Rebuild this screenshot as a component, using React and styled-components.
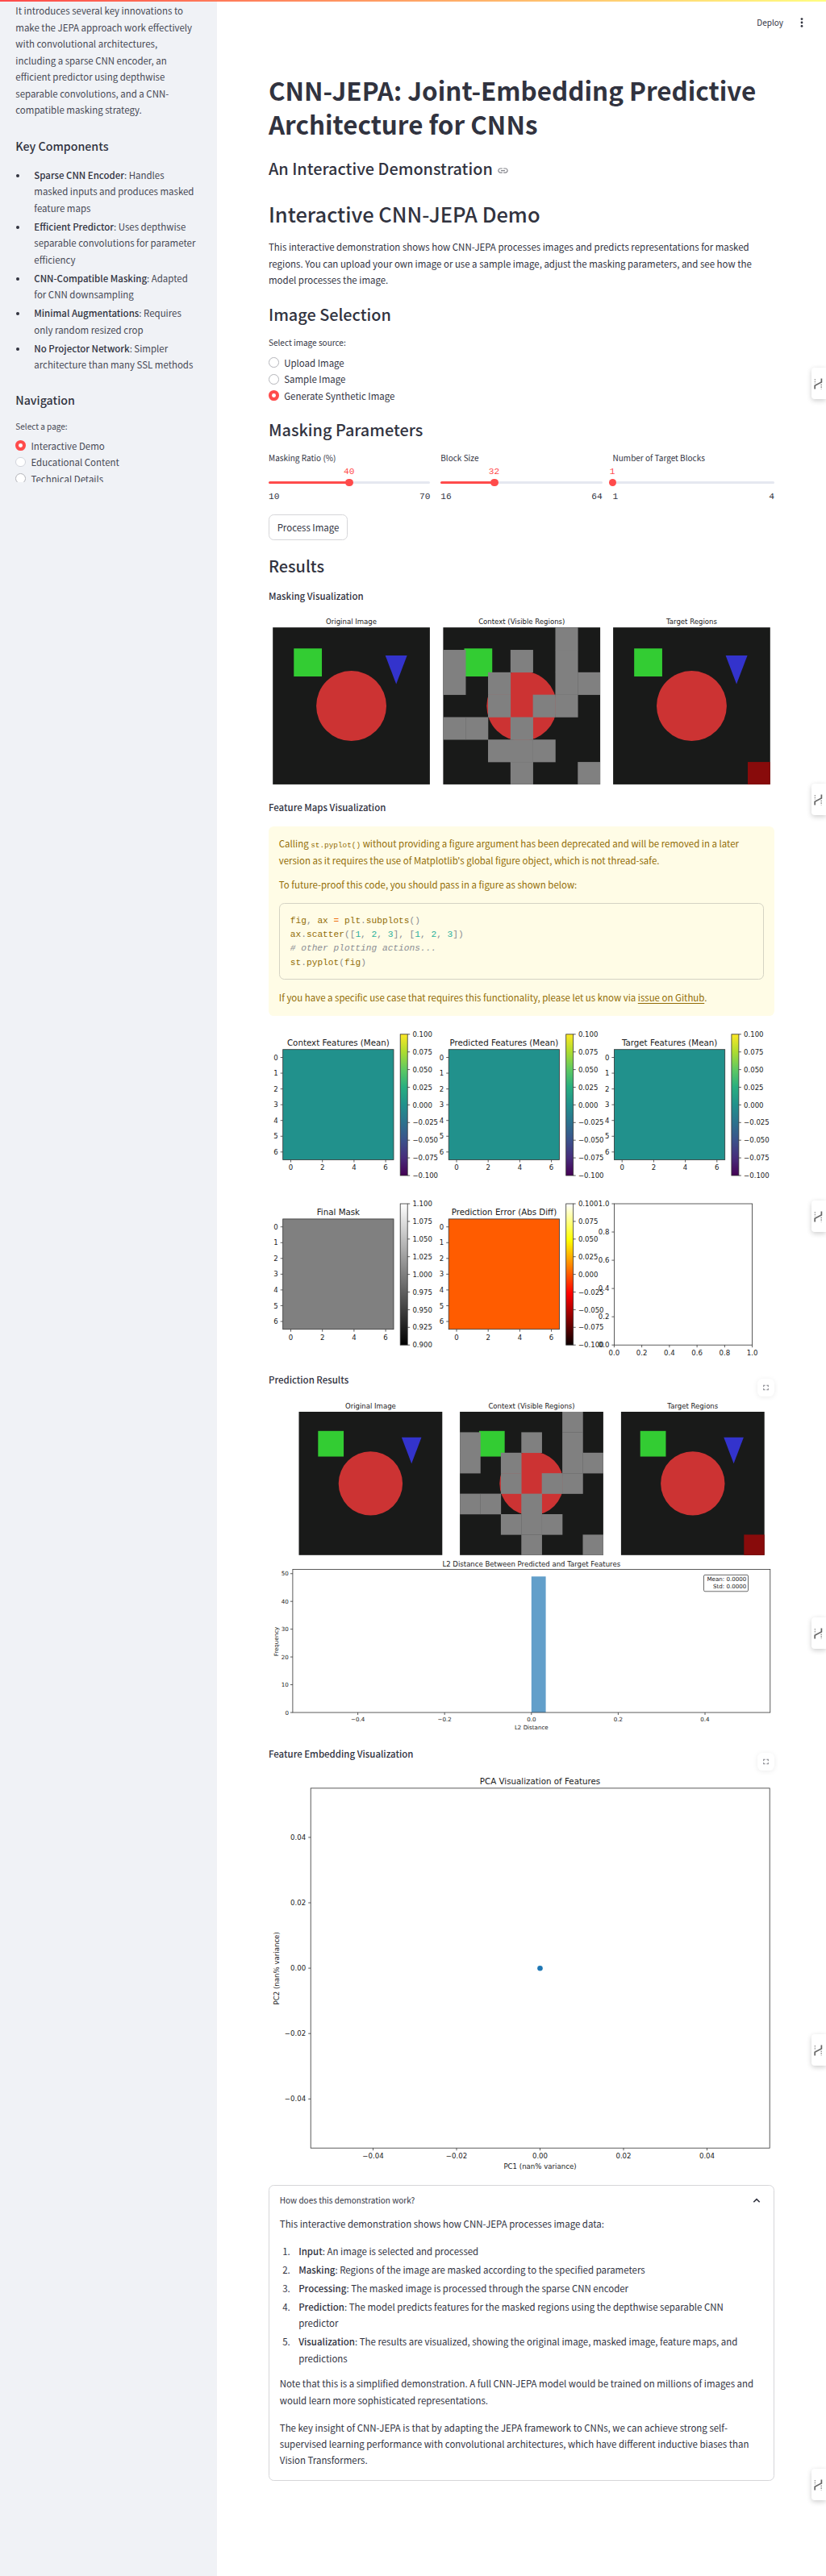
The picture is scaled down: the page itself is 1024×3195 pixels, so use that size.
import React from "react";
import styled, { createGlobalStyle, css } from "styled-components";

const SANS = '"Noto Sans CJK SC", "Open Sans", sans-serif';
const MONO = '"Liberation Mono", monospace';
const INK = "#31333f";

const Global = createGlobalStyle`
  *, *::before, *::after { box-sizing: border-box; }
  body { margin: 0; background: #fff; color: ${INK}; font-family: ${SANS}; font-size: 11.46px; line-height: 20.48px; }
  h1, h2, h3, h4, p, ul, ol { margin: 0; padding: 0; font-weight: 400; }
  strong { font-weight: 500; }
`;

const Page = styled.div`
  position: relative;
  display: flex;
  width: 1024px;
  height: 3195px;
  overflow: hidden;
`;
const Stripe = styled.div`
  position: absolute;
  inset: 0 0 auto 0;
  height: 2px;
  background: linear-gradient(90deg, #ff4b4b, #fffd80);
`;

/* ---------- sidebar ---------- */
const Sidebar = styled.aside`
  width: 269px;
  flex: none;
  background: #f0f2f6;
`;
const SideScroll = styled.div`
  height: 597.5px;
  overflow: hidden;
  padding: 3.4px 19.3px 0;
  white-space: nowrap;
  color: #464854;
`;
const SideHeading = styled.h3`
  font-size: 14.2px;
  font-weight: 500;
  line-height: 20px;
  margin-top: ${(p) => p.$gap}px;
  color: ${INK};
`;
const Bullets = styled.ul`
  list-style: none;
  margin-top: 16.2px;
  strong { color: ${INK}; }
`;
const Bullet = styled.li`
  position: relative;
  padding-left: 23px;
  margin-bottom: 2.56px;
  &::before {
    content: "";
    position: absolute;
    left: 0.7px;
    top: 8.8px;
    width: 4.2px;
    height: 4.2px;
    border-radius: 50%;
    background: ${INK};
  }
`;

/* ---------- form parts ---------- */
const Label = styled.div`
  font-size: 10.03px;
  line-height: 18px;
  margin-top: ${(p) => p.$gap || 0}px;
`;
const RadioGroup = styled.div`
  margin-top: ${(p) => p.$gap}px;
`;
const RadioRow = styled.div`
  display: flex;
  align-items: center;
  gap: 6.4px;
  height: 20.5px;
`;
const Dot = styled.span`
  width: 12.8px;
  height: 12.8px;
  margin-top: -1px;
  border-radius: 50%;
  background: #fff;
  border: 1px solid ${(p) => (p.$faint ? "#d3d5dc" : "#b4b5ba")};
  ${(p) => p.$on && css`border: 4px solid #ff4b4b;`}
`;
const Radio = ({ children, ...rest }) => (
  <RadioRow>
    <Dot {...rest} />
    {children}
  </RadioRow>
);

const Sliders = styled.div`
  display: grid;
  grid-template-columns: repeat(3, 1fr);
  gap: 12.8px;
  margin-top: 13.1px;
  height: 65px;
`;
const Mono = styled.div`
  font-family: ${MONO};
  font-size: 11.2px;
  line-height: 14px;
`;
const ValueLine = styled(Mono)`
  color: #ff4b4b;
  width: 40px;
  margin-top: 1.4px;
  text-align: center;
  margin-left: calc(${(p) => p.$pos}% - 20.5px);
`;
const Track = styled.div`
  position: relative;
  height: 3.2px;
  margin-top: 4.5px;
  border-radius: 2px;
  background: linear-gradient(90deg, #ff4b4b ${(p) => p.$pos}%, #e5e8f0 ${(p) => p.$pos}%);
  &::after {
    content: "";
    position: absolute;
    left: calc(${(p) => p.$pos}% - 4.8px);
    top: -3.2px;
    width: 9.6px;
    height: 9.6px;
    border-radius: 50%;
    background: #ff4b4b;
  }
`;
const Range = styled(Mono)`
  display: flex;
  justify-content: space-between;
  margin-top: 8.9px;
`;
const Slider = ({ label, value, pos, min, max }) => (
  <div>
    <Label>{label}</Label>
    <ValueLine $pos={pos}>{value}</ValueLine>
    <Track $pos={pos} />
    <Range><span>{min}</span><span>{max}</span></Range>
  </div>
);
const Button = styled.button`
  display: block;
  margin-top: 14.3px;
  width: 98px;
  height: 31.5px;
  padding: 0;
  border: 1px solid #d6d6d9;
  border-radius: 6.4px;
  background: #fff;
  color: ${INK};
  font: inherit;
`;

/* ---------- main column ---------- */
const Main = styled.main`
  flex: 1;
  padding: 0 64px;
  white-space: nowrap;
`;
const Toolbar = styled.header`
  display: flex;
  justify-content: flex-end;
  align-items: center;
  gap: 21px;
  height: 56px;
  margin-right: -36px;
  font-size: 10.03px;
`;
const Title = styled.h1`
  margin-top: 35px;
  font-size: 31.4px;
  line-height: 42.4px;
  font-weight: 700;
`;
const Heading = styled.h2`
  display: flex;
  align-items: center;
  gap: 5.7px;
  margin-top: ${(p) => p.$gap}px;
  height: ${(p) => p.$h || 27}px;
  line-height: ${(p) => p.$h || 27}px;
  font-size: ${(p) => p.$size || 19.87}px;
  font-weight: 500;
`;
const Sub = styled.h4`
  margin-top: ${(p) => p.$gap}px;
  height: 20px;
  line-height: 20px;
  font-weight: 500;
  font-size: 11.46px;
`;
const Para = styled.p`
  margin-top: ${(p) => p.$gap || 0}px;
`;
const Figure = styled.svg`
  display: block;
  margin-top: ${(p) => p.$gap || 0}px;
  width: 627px;
  height: ${(p) => p.$h}px;
  overflow: visible;
  font-family: "DejaVu Sans", sans-serif;
`;

const Warning = styled.section`
  margin-top: 13.7px;
  height: 235px;
  padding: 11.4px 12.8px;
  border-radius: 6.4px;
  background: #fffce6;
  color: #926c05;
`;
const InlineCode = styled.code`
  font-family: ${MONO};
  font-size: 9.4px;
  line-height: 1;
`;
const Code = styled.pre`
  margin: 12.7px 0 12.3px;
  height: 94.5px;
  padding: 13.2px 13px;
  border: 1px solid #d5d3c4;
  border-radius: 6.4px;
  font-family: ${MONO};
  font-size: 11.2px;
  line-height: 17.1px;
`;
const Tok = styled.span`
  color: ${(p) => p.$c};
  font-style: ${(p) => (p.$i ? "italic" : "normal")};
`;
const Anchor = styled.a`
  text-decoration: underline;
  text-underline-offset: 2px;
`;

const Expander = styled.section`
  margin-top: 14.3px;
  height: 366.4px;
  padding: 8px 12.8px;
  border: 1px solid #d6d6d9;
  border-radius: 6.4px;
`;
const ExpanderHead = styled.div`
  display: flex;
  justify-content: space-between;
  align-items: center;
  height: 20px;
  font-size: 10.03px;
  padding-right: 3px;
`;
const Steps = styled.ol`
  list-style: none;
  margin-top: 13.2px;
`;
const Step = styled.li`
  display: flex;
  margin-bottom: 2.56px;
  &::before {
    content: "${(p) => p.$n}.";
    width: 23.4px;
    padding-left: 3.4px;
    flex: none;
  }
`;

const SideTab = styled.div`
  position: absolute;
  right: 0;
  top: ${(p) => p.$top}px;
  width: 18px;
  height: 39px;
  display: flex;
  align-items: center;
  justify-content: center;
  padding-right: 1px;
  border-radius: 4px 0 0 4px;
  background: #fff;
  box-shadow: 0 2px 6px rgba(0, 0, 0, 0.2);
`;
const Expand = styled.div`
  position: absolute;
  left: 939px;
  top: ${(p) => p.$top}px;
  width: 21px;
  height: 22px;
  display: flex;
  align-items: center;
  justify-content: center;
  border-radius: 6.4px;
  background: #fff;
  box-shadow: 0 1px 6px rgba(0, 0, 0, 0.08);
`;

/* ---------- icons ---------- */
const TabIcon = () => (
  <svg width="11" height="14" viewBox="0 0 11 14" fill="none">
    <path d="M1.2 13.5V9.2L9.4 4.9V.6" stroke="#666" strokeWidth="1.7" />
    <path d="M1.4 1v6M9.2 7.6v6" stroke="#a0a0a0" strokeWidth="1.5" strokeDasharray="1.6 1.1" />
  </svg>
);
const ExpandIcon = () => (
  <svg width="7" height="8" viewBox="0 0 8 8" fill="none" stroke="#84858c" strokeWidth="1.2">
    <path d="M.8 3V.8H3M5 .8h2.200V3M7.200 5v2.200H5M3 7.200H.8V5" />
  </svg>
);
const LinkGlyph = styled.svg`
  margin-top: 6px;
`;
const LinkIcon = () => (
  <LinkGlyph width="15" height="15" viewBox="0 0 24 24" fill="#84858c">
    <path d="M3.900 12c0-1.710 1.390-3.100 3.100-3.100h4V7H7c-2.760 0-5 2.240-5 5s2.240 5 5 5h4v-1.900H7c-1.710 0-3.100-1.390-3.100-3.100zM8 13h8v-2H8v2zm9-6h-4v1.900h4c1.710 0 3.100 1.390 3.100 3.100s-1.390 3.100-3.100 3.100h-4V17h4c2.760 0 5-2.240 5-5s-2.240-5-5-5z" />
  </LinkGlyph>
);
const Kebab = () => (
  <svg width="4" height="12" viewBox="0 0 4 12" fill={INK}>
    <circle cx="2" cy="1.6" r="1.400" /><circle cx="2" cy="6" r="1.400" /><circle cx="2" cy="10.400" r="1.400" />
  </svg>
);
const Chevron = () => (
  <svg width="10" height="7" viewBox="0 0 10 7" fill="none" stroke={INK} strokeWidth="1.600">
    <path d="M1.300 5.300L5 1.600l3.700 3.700" />
  </svg>
);

/* ---------- plots ---------- */
const Txt = ({ x, y, s = 8.55, a = "middle", children, ...r }) => (
  <text x={x} y={y + s * 0.365} fontSize={s} textAnchor={a} fill="#1a1a1a" {...r}>{children}</text>
);

const MASK = [[5, 0], [0, 1], [3, 1], [5, 1], [0, 2], [2, 2], [5, 2], [6, 2], [2, 3], [4, 3], [5, 3], [0, 4], [1, 4], [3, 4], [2, 5], [3, 5], [4, 5], [3, 6], [6, 6]];

const Scene = ({ x, y, size, title, kind, ts, gap }) => (
  <g>
    <Txt x={x + size / 2} y={y - gap} s={ts}>{title}</Txt>
    <g transform={`translate(${x} ${y}) scale(${size / 224})`}>
      <rect width="224" height="224" fill="#191a19" />
      <rect x="30" y="30" width="40" height="40" fill="#33cc33" />
      <circle cx="112" cy="112" r="50" fill="#cc3333" />
      <path d="M160.500 40h31L176 81z" fill="#3333cc" />
      {kind === "context" && MASK.map(([c, r]) => (
        <rect key={c + "-" + r} x={c * 32} y={r * 32} width={Math.min(32.3, 224 - c * 32)} height={Math.min(32.3, 224 - r * 32)} fill="#808080" />
      ))}
      {kind === "target" && <rect x="192" y="192" width="32" height="32" fill="#880b0b" />}
    </g>
  </g>
);

const Scenes = ({ xs, ...r }) => (
  <g>
    <Scene x={xs[0]} title="Original Image" {...r} />
    <Scene x={xs[1]} title="Context (Visible Regions)" kind="context" {...r} />
    <Scene x={xs[2]} title="Target Regions" kind="target" {...r} />
  </g>
);

const Frame = ({ x, y, w, h, fill = "none" }) => (
  <rect x={x} y={y} width={w} height={h} fill={fill} stroke="#333" strokeWidth="0.8" />
);
const XTick = ({ x, y, s, dy = 9.8, children }) => (
  <g><path d={`M${x} ${y}v3`} stroke="#333" strokeWidth="0.8" /><Txt x={x} y={y + dy} s={s}>{children}</Txt></g>
);
const YTick = ({ x, y, s, dx = 6, children }) => (
  <g><path d={`M${x} ${y}h-3`} stroke="#333" strokeWidth="0.8" /><Txt x={x - dx} y={y} s={s} a="end">{children}</Txt></g>
);

const SIGNED = ["0.100", "0.075", "0.050", "0.025", "0.000", "−0.025", "−0.050", "−0.075", "−0.100"];
const ONES = ["1.100", "1.075", "1.050", "1.025", "1.000", "0.975", "0.950", "0.925", "0.900"];

const HeatMap = ({ x, y, title, fill, map, labels }) => (
  <g>
    <Txt x={x + 68.700} y={y - 8.600} s={10.270}>{title}</Txt>
    <Frame x={x} y={y} w={137.300} h={136.800} fill={fill} />
    {[0, 1, 2, 3, 4, 5, 6].map((n) => <YTick key={n} x={x} y={y + 9.800 + n * 19.550}>{n}</YTick>)}
    {[0, 2, 4, 6].map((n) => <XTick key={n} x={x + 9.800 + n * 19.600} y={y + 136.800}>{n}</XTick>)}
    <Frame x={x + 145.500} y={y - 18.900} w={9} h={175.200} fill={`url(#${map})`} />
    {labels.map((t, i) => (
      <g key={i}>
        <path d={`M${x + 154.500} ${y - 18.900 + i * 21.900}h3`} stroke="#333" strokeWidth="0.8" />
        <Txt x={x + 160.700} y={y - 18.900 + i * 21.900} a="start">{t}</Txt>
      </g>
    ))}
  </g>
);

const Gradient = ({ id, stops }) => (
  <linearGradient id={id} x1="0" y1="1" x2="0" y2="0">
    {stops.map(([o, c]) => <stop key={o} offset={o} stopColor={c} />)}
  </linearGradient>
);

const FeatureFigure = () => (
  <Figure $h={418} $gap={12} viewBox="333 1272 627 418">
    <defs>
      <Gradient id="viridis" stops={[[0, "#440154"], [0.125, "#472d7b"], [0.25, "#3b528b"], [0.375, "#2c728e"], [0.5, "#21918c"], [0.625, "#28ae80"], [0.75, "#5ec962"], [0.875, "#addc30"], [1, "#fde725"]]} />
      <Gradient id="gray" stops={[[0, "#000"], [1, "#fff"]]} />
      <Gradient id="hot" stops={[[0, "#0b0000"], [0.365, "#ff0000"], [0.746, "#ffff00"], [1, "#fff"]]} />
    </defs>
    <HeatMap x={350.700} y={1301.700} title="Context Features (Mean)" fill="#21918c" map="viridis" labels={SIGNED} />
    <HeatMap x={556.200} y={1301.700} title="Predicted Features (Mean)" fill="#21918c" map="viridis" labels={SIGNED} />
    <HeatMap x={761.400} y={1301.700} title="Target Features (Mean)" fill="#21918c" map="viridis" labels={SIGNED} />
    <HeatMap x={350.700} y={1511.900} title="Final Mask" fill="#808080" map="gray" labels={ONES} />
    <HeatMap x={556.200} y={1511.900} title="Prediction Error (Abs Diff)" fill="#ff5c00" map="hot" labels={SIGNED} />
    <Frame x={761.400} y={1493} w={171.200} h={175.200} />
    {["0.0", "0.2", "0.4", "0.6", "0.8", "1.0"].map((t, i) => (
      <g key={t}>
        <XTick x={761.400 + i * 34.240} y={1668.200}>{t}</XTick>
        <YTick x={761.400} y={1668.200 - i * 35.040}>{t}</YTick>
      </g>
    ))}
  </Figure>
);

const ResultsFigure = () => (
  <Figure $h={418} $gap={12.700} viewBox="333 1734 627 418">
    <Scenes xs={[370.500, 570.100, 769.900]} y={1751} size={177.800} ts={8.550} gap={7} />
    <Txt x={658.800} y={1939.800} s={8.550}>L2 Distance Between Predicted and Target Features</Txt>
    <rect x={658.800} y={1955.300} width={17.800} height={168.700} fill="#629fca" />
    <Frame x={362.900} y={1946.400} w={591.900} h={177.600} />
    {["0", "10", "20", "30", "40", "50"].map((t, i) => <YTick key={t} x={362.900} y={2124 - i * 34.450} s={7.100} dx={5}>{t}</YTick>)}
    {["−0.4", "−0.2", "0.0", "0.2", "0.4"].map((t, i) => <XTick key={t} x={443.600 + i * 107.600} y={2124} s={7.100} dy={8.300}>{t}</XTick>)}
    <Txt x={658.800} y={2142.700} s={7.100}>L2 Distance</Txt>
    <Txt x={0} y={0} s={7.100} transform="translate(342.300 2036) rotate(-90)">Frequency</Txt>
    <rect x={872.500} y={1953.400} width={55} height={20.400} rx="1.500" fill="#fff" stroke="#444" strokeWidth="0.8" />
    <Txt x={925.300} y={1958.900} s={7.100} a="end">Mean: 0.0000</Txt>
    <Txt x={925.300} y={1967.500} s={7.100} a="end">Std: 0.0000</Txt>
  </Figure>
);

const PcaFigure = () => (
  <Figure $h={498} $gap={12.700} viewBox="333 2198 627 498">
    <Txt x={669.500} y={2208.800} s={10.300}>PCA Visualization of Features</Txt>
    <Frame x={385.200} y={2217.900} w={569} h={446.300} />
    {["0.04", "0.02", "0.00", "−0.02", "−0.04"].map((t, i) => <YTick key={t} x={385.200} y={2278.900 + i * 81.100} s={8.600}>{t}</YTick>)}
    {["−0.04", "−0.02", "0.00", "0.02", "0.04"].map((t, i) => <XTick key={t} x={462.500 + i * 103.500} y={2664.200} s={8.600} dy={10}>{t}</XTick>)}
    <Txt x={669.500} y={2687.200} s={8.600}>PC1 (nan% variance)</Txt>
    <Txt x={0} y={0} s={8.600} transform="translate(343.200 2441.300) rotate(-90)">PC2 (nan% variance)</Txt>
    <circle cx={669.500} cy={2441.200} r={3.300} fill="#1f77b4" />
  </Figure>
);

const G = "#8b8d93";
const N = "#29b09d";
const P = ({ children }) => <Tok $c={G}>{children}</Tok>;
const Num = ({ children }) => <Tok $c={N}>{children}</Tok>;

export default function App() {
  return (
    <Page>
      <Global />
      <Sidebar>
        <SideScroll>
          <p>
            It introduces several key innovations to<br />make the JEPA approach work effectively<br />with convolutional architectures,<br />including a sparse CNN encoder, an<br />efficient predictor using depthwise<br />separable convolutions, and a CNN-<br />compatible masking strategy.
          </p>
          <SideHeading $gap={24}>Key Components</SideHeading>
          <Bullets>
            <Bullet><strong>Sparse CNN Encoder</strong>: Handles<br />masked inputs and produces masked<br />feature maps</Bullet>
            <Bullet><strong>Efficient Predictor</strong>: Uses depthwise<br />separable convolutions for parameter<br />efficiency</Bullet>
            <Bullet><strong>CNN-Compatible Masking</strong>: Adapted<br />for CNN downsampling</Bullet>
            <Bullet><strong>Minimal Augmentations</strong>: Requires<br />only random resized crop</Bullet>
            <Bullet><strong>No Projector Network</strong>: Simpler<br />architecture than many SSL methods</Bullet>
          </Bullets>
          <SideHeading $gap={23.500}>Navigation</SideHeading>
          <Label $gap={13.200}>Select a page:</Label>
          <RadioGroup $gap={5}>
            <Radio $on>Interactive Demo</Radio>
            <Radio $faint>Educational Content</Radio>
            <Radio>Technical Details</Radio>
          </RadioGroup>
        </SideScroll>
      </Sidebar>
      <Main>
        <Toolbar><span>Deploy</span><Kebab /></Toolbar>
        <Title>CNN-JEPA: Joint-Embedding Predictive<br />Architecture for CNNs</Title>
        <Heading $gap={19}>An Interactive Demonstration <LinkIcon /></Heading>
        <Heading $gap={25.850} $h={34.500} $size={25.470}>Interactive CNN-JEPA Demo</Heading>
        <Para $gap={14}>
          This interactive demonstration shows how CNN-JEPA processes images and predicts representations for masked<br />regions. You can upload your own image or use a sample image, adjust the masking parameters, and see how the<br />model processes the image.
        </Para>
        <Heading $gap={18.100}>Image Selection</Heading>
        <Label $gap={13.200}>Select image source:</Label>
        <RadioGroup $gap={6}>
          <Radio>Upload Image</Radio>
          <Radio>Sample Image</Radio>
          <Radio $on>Generate Synthetic Image</Radio>
        </RadioGroup>
        <Heading $gap={17.400}>Masking Parameters</Heading>
        <Sliders>
          <Slider label="Masking Ratio (%)" value="40" pos={50} min="10" max="70" />
          <Slider label="Block Size" value="32" pos={33.333} min="16" max="64" />
          <Slider label="Number of Target Blocks" value="1" pos={0} min="1" max="4" />
        </Sliders>
        <Button>Process Image</Button>
        <Heading $gap={18.200}>Results</Heading>
        <Sub $gap={14}>Masking Visualization</Sub>
        <Figure $h={225} $gap={11} viewBox="333 760 627 225">
          <Scenes xs={[338.200, 549.400, 760.100]} y={778.200} size={194.700} ts={8.550} gap={7.200} />
        </Figure>
        <Sub $gap={6.300}>Feature Maps Visualization</Sub>
        <Warning>
          <Para>
            Calling <InlineCode>st.pyplot()</InlineCode> without providing a figure argument has been deprecated and will be removed in a later<br />version as it requires the use of Matplotlib's global figure object, which is not thread-safe.
          </Para>
          <Para $gap={9.700}>To future-proof this code, you should pass in a figure as shown below:</Para>
          <Code>
            fig<P>,</P> ax <Tok $c="#ed6f13">=</Tok> plt<P>.</P>subplots<P>()</P>{"\n"}
            ax<P>.</P>scatter<P>([</P><Num>1</Num><P>,</P> <Num>2</Num><P>,</P> <Num>3</Num><P>],</P> <P>[</P><Num>1</Num><P>,</P> <Num>2</Num><P>,</P> <Num>3</Num><P>])</P>{"\n"}
            <Tok $c={G} $i># other plotting actions...</Tok>{"\n"}
            st<P>.</P>pyplot<P>(</P>fig<P>)</P>
          </Code>
          <Para>If you have a specific use case that requires this functionality, please let us know via <Anchor>issue on Github</Anchor>.</Para>
        </Warning>
        <FeatureFigure />
        <Sub $gap={11.300}>Prediction Results</Sub>
        <ResultsFigure />
        <Sub $gap={13.300}>Feature Embedding Visualization</Sub>
        <PcaFigure />
        <Expander>
          <ExpanderHead>How does this demonstration work?<Chevron /></ExpanderHead>
          <Para $gap={8.800}>This interactive demonstration shows how CNN-JEPA processes image data:</Para>
          <Steps>
            <Step $n={1}><span><strong>Input</strong>: An image is selected and processed</span></Step>
            <Step $n={2}><span><strong>Masking</strong>: Regions of the image are masked according to the specified parameters</span></Step>
            <Step $n={3}><span><strong>Processing</strong>: The masked image is processed through the sparse CNN encoder</span></Step>
            <Step $n={4}><span><strong>Prediction</strong>: The model predicts features for the masked regions using the depthwise separable CNN<br />predictor</span></Step>
            <Step $n={5}><span><strong>Visualization</strong>: The results are visualized, showing the original image, masked image, feature maps, and<br />predictions</span></Step>
          </Steps>
          <Para $gap={11}>Note that this is a simplified demonstration. A full CNN-JEPA model would be trained on millions of images and<br />would learn more sophisticated representations.</Para>
          <Para $gap={13.400}>The key insight of CNN-JEPA is that by adapting the JEPA framework to CNNs, we can achieve strong self-<br />supervised learning performance with convolutional architectures, which have different inductive biases than<br />Vision Transformers.</Para>
        </Expander>
      </Main>
      <Stripe />
      <Expand $top={1710}><ExpandIcon /></Expand>
      <Expand $top={2173.500}><ExpandIcon /></Expand>
      {[456, 972, 1489, 2006, 2523, 3062].map((t) => <SideTab key={t} $top={t}><TabIcon /></SideTab>)}
    </Page>
  );
}
